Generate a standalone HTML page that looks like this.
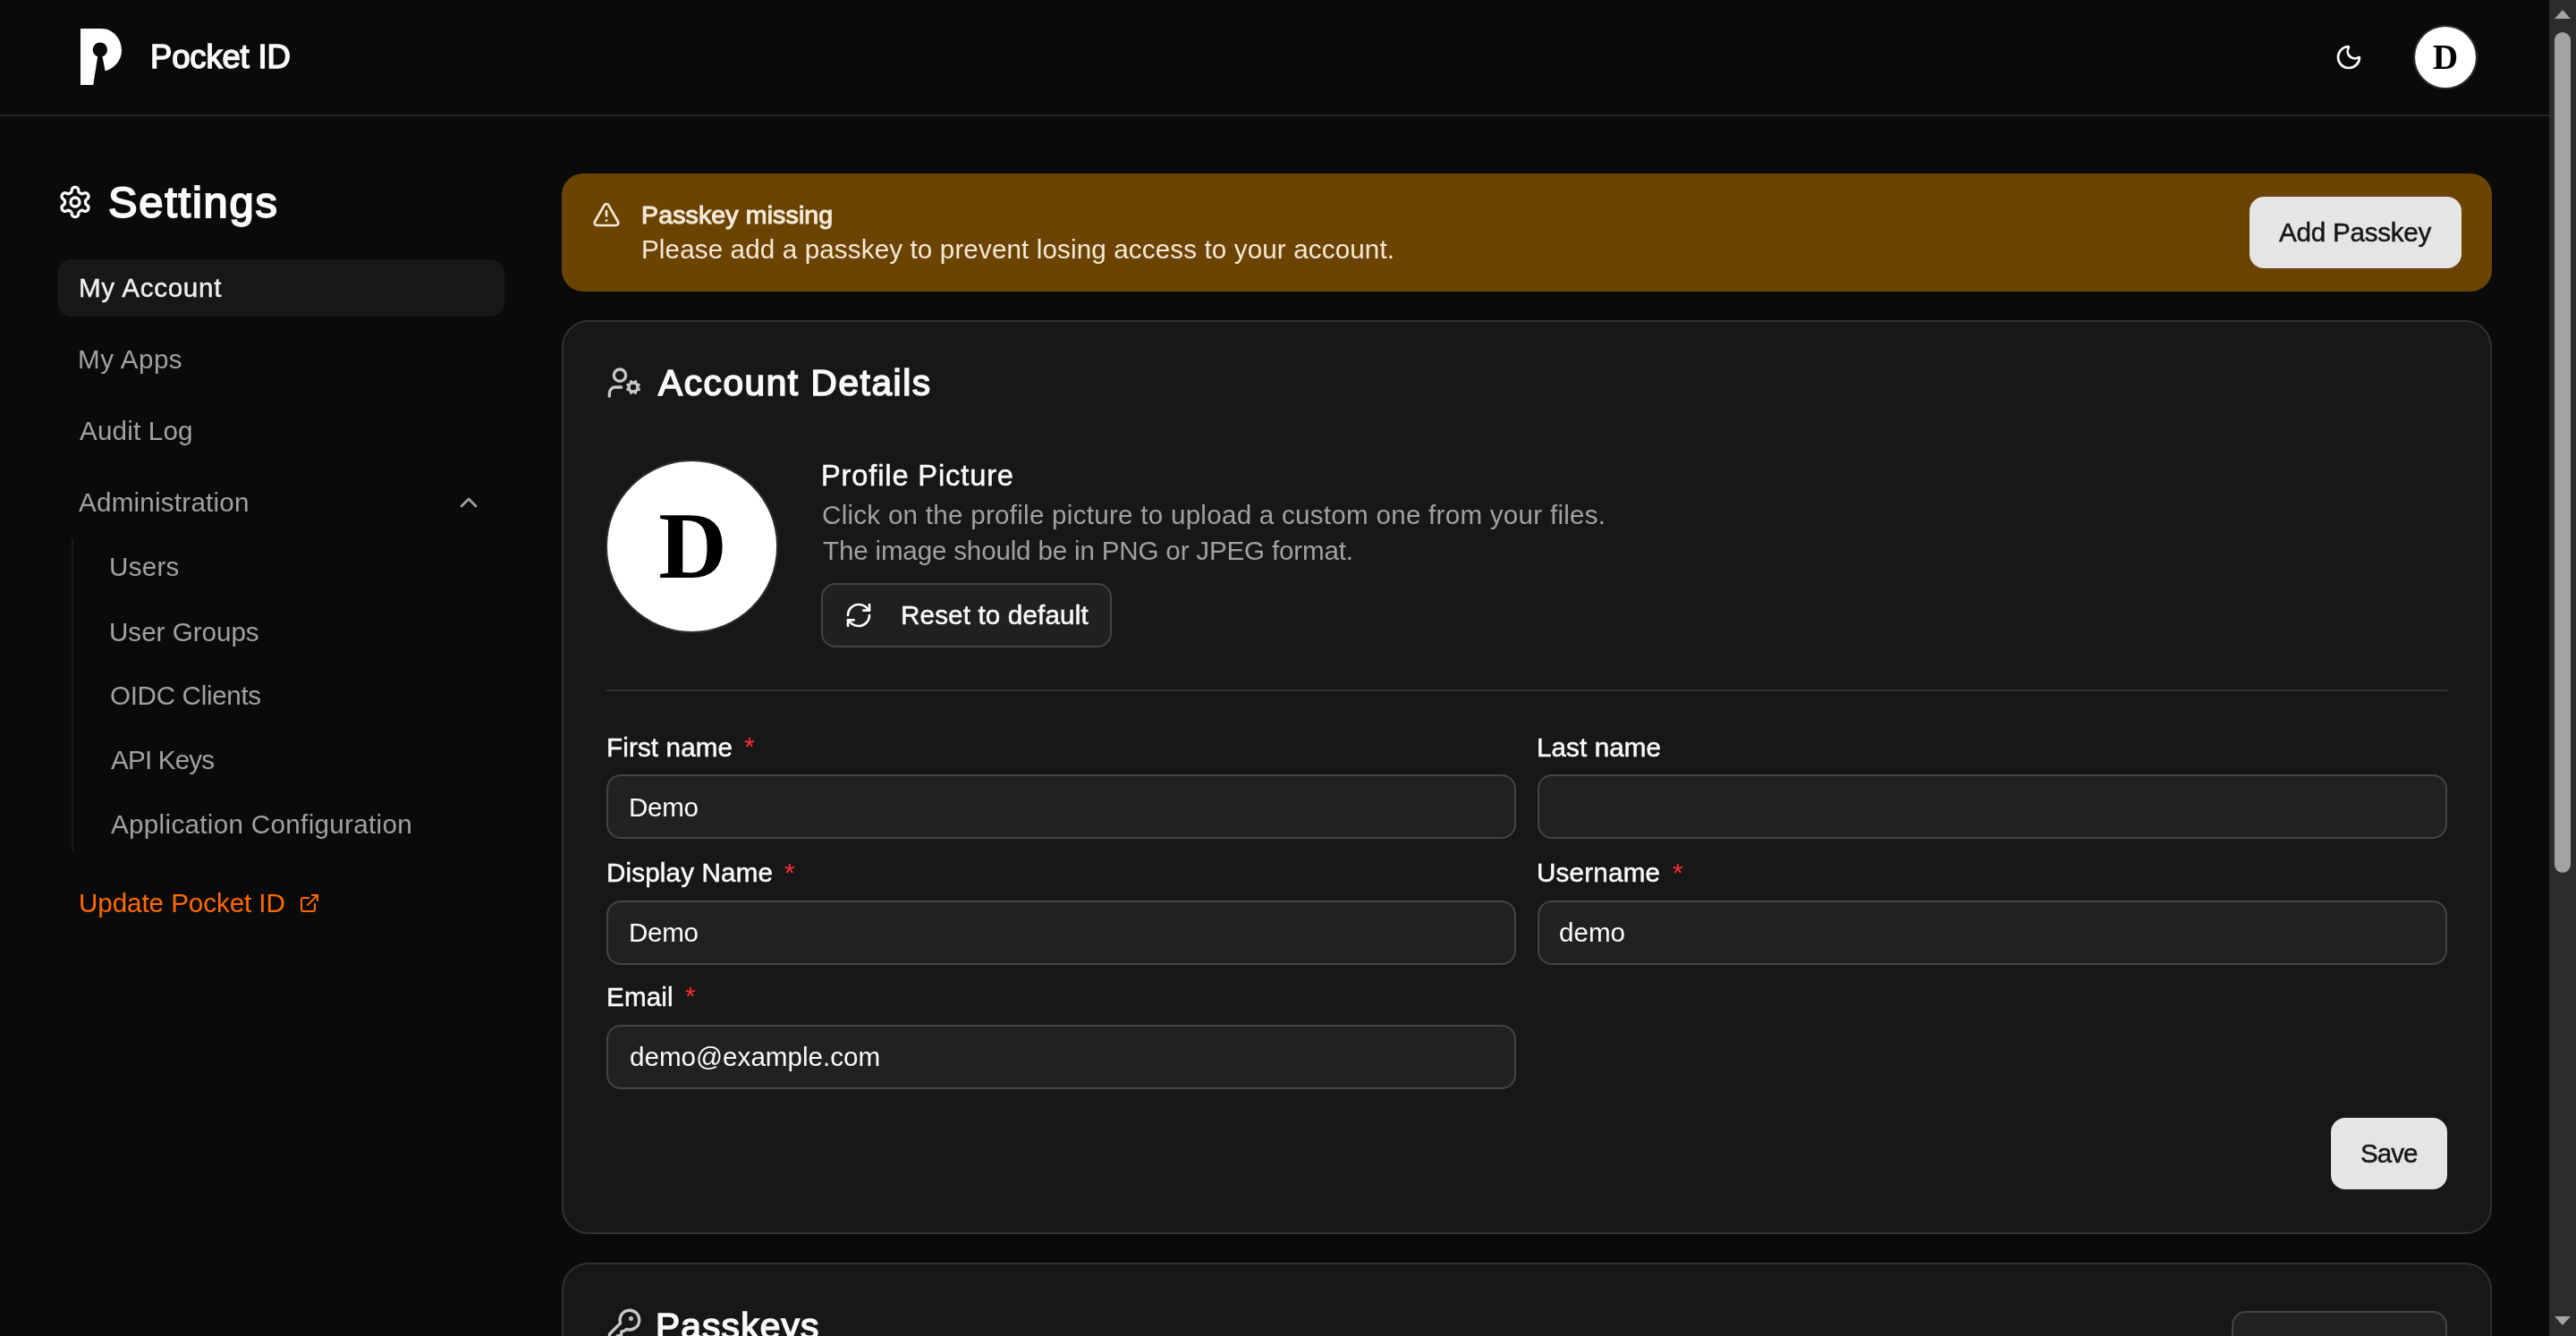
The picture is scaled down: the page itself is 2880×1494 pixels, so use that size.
<!DOCTYPE html>
<html>
<head>
<meta charset="utf-8">
<style>
@media (max-width:2000px){html{zoom:0.5}}
html,body{margin:0;padding:0;width:2880px;height:1494px;overflow:hidden;background:#0a0a0a;}
body{font-family:"Liberation Sans",sans-serif;color:#fafafa;position:relative;}
.a{position:absolute;box-sizing:border-box;}
.t{position:absolute;white-space:nowrap;line-height:1;will-change:transform;}
svg{position:absolute;overflow:visible;}
</style>
</head>
<body>
<div class="a" style="left:0;top:128px;width:2850px;height:2px;background:#232423"></div>
<svg style="left:90px;top:32px" width="46" height="63" viewBox="0 0 46 63">
<path fill="#fff" d="M0 0 H23.7 C36 0 46 11 46 24.5 C46 35 38.5 44.5 27.6 47.2 L24.5 31.2 A8.1 8.1 0 1 0 19.2 31.2 L14.2 62.9 H0 Z"/>
</svg>
<div class="t" style="left:167.8px;top:46.4px;font-size:36.5px;letter-spacing:-0.17px;color:#fafafa;-webkit-text-stroke:1.5px #fafafa;">Pocket ID</div>
<svg style="left:2610px;top:48px" width="32" height="32" viewBox="0 0 24 24" fill="none" stroke="#fafafa" stroke-width="2" stroke-linecap="round" stroke-linejoin="round"><path d="M20.985 12.486a9 9 0 1 1-9.473-9.472c.405-.022.617.46.402.803a6 6 0 0 0 8.268 8.268c.344-.215.825-.004.803.401"/></svg>
<div class="a" style="left:2700px;top:30px;width:68px;height:68px;border-radius:50%;background:#fff;box-shadow:0 0 0 2px #2f2f2f"></div>
<div class="t" style="left:2699px;top:45px;width:70px;text-align:center;font-family:'Liberation Serif',serif;font-weight:700;font-size:39.3px;color:#000">D</div>
<div class="a" style="left:2850px;top:0;width:30px;height:1494px;background:#2c2c2c"></div>
<div class="a" style="left:2856px;top:36px;width:18px;height:940px;border-radius:9px;background:#a3a3a3"></div>
<svg style="left:2856px;top:11px" width="18" height="10" viewBox="0 0 18 10"><path d="M9 0 L18 10 H0 Z" fill="#a3a3a3"/></svg>
<svg style="left:2856px;top:1472px" width="18" height="10" viewBox="0 0 18 10"><path d="M0 0 H18 L9 10 Z" fill="#a3a3a3"/></svg>
<svg style="left:64px;top:206px" width="40" height="40" viewBox="0 0 24 24" fill="none" stroke="#fafafa" stroke-width="2" stroke-linecap="round" stroke-linejoin="round"><path d="M12.22 2h-.44a2 2 0 0 0-2 2v.18a2 2 0 0 1-1 1.73l-.43.25a2 2 0 0 1-2 0l-.15-.08a2 2 0 0 0-2.73.73l-.22.38a2 2 0 0 0 .73 2.73l.15.1a2 2 0 0 1 1 1.72v.51a2 2 0 0 1-1 1.74l-.15.09a2 2 0 0 0-.73 2.730l.22.38a2 2 0 0 0 2.73.73l.15-.08a2 2 0 0 1 2 0l.43.25a2 2 0 0 1 1 1.73V20a2 2 0 0 0 2 2h.44a2 2 0 0 0 2-2v-.18a2 2 0 0 1 1-1.73l.43-.25a2 2 0 0 1 2 0l.15.08a2 2 0 0 0 2.73-.73l.22-.39a2 2 0 0 0-.73-2.73l-.15-.08a2 2 0 0 1-1-1.74v-.5a2 2 0 0 1 1-1.74l.15-.09a2 2 0 0 0 .73-2.73l-.22-.38a2 2 0 0 0-2.73-.73l-.15.08a2 2 0 0 1-2 0l-.43-.25a2 2 0 0 1-1-1.73V4a2 2 0 0 0-2-2z"/><circle cx="12" cy="12" r="3"/></svg>
<div class="t" style="left:121.0px;top:201.7px;font-size:48.8px;letter-spacing:1.78px;color:#fafafa;-webkit-text-stroke:1.9px #fafafa;">Settings</div>
<div class="a" style="left:64px;top:290px;width:500px;height:64px;border-radius:16px;background:#171717"></div>
<div class="t" style="left:88.2px;top:306.9px;font-size:29.6px;letter-spacing:0.72px;color:#f0f0f0;-webkit-text-stroke:0.4px #f0f0f0;">My Account</div>
<div class="t" style="left:87.0px;top:386.9px;font-size:29.6px;letter-spacing:0.53px;color:#a1a1a1;">My Apps</div>
<div class="t" style="left:89.0px;top:466.9px;font-size:29.6px;letter-spacing:0.18px;color:#a1a1a1;">Audit Log</div>
<div class="t" style="left:88.4px;top:547.4px;font-size:29.6px;letter-spacing:0.23px;color:#a1a1a1;">Administration</div>
<svg style="left:508px;top:546px" width="32" height="32" viewBox="0 0 24 24" fill="none" stroke="#a1a1a1" stroke-width="2" stroke-linecap="round" stroke-linejoin="round"><path d="m18 15-6-6-6 6"/></svg>
<div class="a" style="left:80px;top:602px;width:2px;height:351px;background:#1a1a1a"></div>
<div class="t" style="left:121.9px;top:619.4px;font-size:29.6px;letter-spacing:0.28px;color:#a1a1a1;">Users</div>
<div class="t" style="left:121.9px;top:691.7px;font-size:29.6px;letter-spacing:-0.01px;color:#a1a1a1;">User Groups</div>
<div class="t" style="left:122.9px;top:762.9px;font-size:29.6px;letter-spacing:-0.32px;color:#a1a1a1;">OIDC Clients</div>
<div class="t" style="left:123.9px;top:834.9px;font-size:29.6px;letter-spacing:-0.8px;color:#a1a1a1;">API Keys</div>
<div class="t" style="left:123.9px;top:907.1px;font-size:29.6px;letter-spacing:0.32px;color:#a1a1a1;">Application Configuration</div>
<div class="t" style="left:87.5px;top:994.9px;font-size:29.6px;letter-spacing:-0.07px;color:#ff6900;">Update Pocket ID</div>
<svg style="left:333.6px;top:998px" width="24" height="24" viewBox="0 0 24 24" fill="none" stroke="#ff6900" stroke-width="2" stroke-linecap="round" stroke-linejoin="round"><path d="M15 3h6v6"/><path d="M10 14 21 3"/><path d="M18 13v6a2 2 0 0 1-2 2H5a2 2 0 0 1-2-2V8a2 2 0 0 1 2-2h6"/></svg>
<div class="a" style="left:628px;top:194px;width:2158px;height:132px;border-radius:24px;background:#6b4404"></div>
<svg style="left:662px;top:224px" width="32" height="32" viewBox="0 0 24 24" fill="none" stroke="#f5e9d6" stroke-width="2" stroke-linecap="round" stroke-linejoin="round"><path d="m21.73 18-8-14a2 2 0 0 0-3.48 0l-8 14A2 2 0 0 0 4 21h16a2 2 0 0 0 1.73-3"/><path d="M12 9v4"/><path d="M12 17h.01"/></svg>
<div class="t" style="left:717.0px;top:225.5px;font-size:28.5px;letter-spacing:0.14px;color:#f5e9d6;-webkit-text-stroke:1.1px #f5e9d6;">Passkey missing</div>
<div class="t" style="left:717.0px;top:264.4px;font-size:29.6px;letter-spacing:0.13px;color:#f5e9d6;">Please add a passkey to prevent losing access to your account.</div>
<div class="a" style="left:2515px;top:220px;width:237px;height:80px;border-radius:16px;background:#e5e5e5"></div>
<div class="t" style="left:2548.2px;top:244.9px;font-size:29.6px;letter-spacing:-0.24px;color:#171717;-webkit-text-stroke:0.5px #171717;">Add Passkey</div>
<div class="a" style="left:628px;top:358px;width:2158px;height:1022px;border:2px solid #303131;border-radius:30px;background:#171717"></div>
<svg style="left:678px;top:408px" width="40" height="40" viewBox="0 0 24 24" fill="none" stroke="#c8c8c8" stroke-width="2" stroke-linecap="round" stroke-linejoin="round"><path d="M10 15H6a4 4 0 0 0-4 4v2"/><path d="m14.305 16.53.923-.382"/><path d="m15.228 13.852-.923-.383"/><path d="m16.852 12.228-.383-.923"/><path d="m16.852 17.772-.383.924"/><path d="m19.148 12.228.383-.923"/><path d="m19.53 18.696-.382-.924"/><path d="m20.772 13.852.924-.383"/><path d="m20.772 16.148.924.383"/><circle cx="18" cy="15" r="3"/><circle cx="9" cy="7" r="4"/></svg>
<div class="t" style="left:736.1px;top:408.4px;font-size:40.6px;letter-spacing:1.58px;color:#fafafa;-webkit-text-stroke:1.6px #fafafa;">Account Details</div>
<div class="a" style="left:678.8px;top:516px;width:189.5px;height:189.5px;border-radius:50%;background:#fff;box-shadow:0 0 0 2px #2f2f2f"></div>
<div class="t" style="left:678.5px;top:557.5px;width:191px;text-align:center;font-family:'Liberation Serif',serif;font-weight:700;font-size:106px;color:#000">D</div>
<div class="t" style="left:918.0px;top:515.6px;font-size:32.6px;letter-spacing:0.87px;color:#fafafa;-webkit-text-stroke:0.5px #fafafa;">Profile Picture</div>
<div class="t" style="left:918.7px;top:560.6px;font-size:29.6px;letter-spacing:0.26px;color:#a1a1a1;">Click on the profile picture to upload a custom one from your files.</div>
<div class="t" style="left:919.7px;top:600.9px;font-size:29.6px;letter-spacing:-0.18px;color:#a1a1a1;">The image should be in PNG or JPEG format.</div>
<div class="a" style="left:918px;top:652px;width:325px;height:72px;border-radius:16px;background:#202020;border:2px solid #444444"></div>
<svg style="left:944px;top:672px" width="32" height="32" viewBox="0 0 24 24" fill="none" stroke="#fafafa" stroke-width="2" stroke-linecap="round" stroke-linejoin="round"><path d="M3 12a9 9 0 0 1 9-9 9.75 9.75 0 0 1 6.74 2.74L21 8"/><path d="M21 3v5h-5"/><path d="M21 12a9 9 0 0 1-9 9 9.75 9.75 0 0 1-6.74-2.74L3 16"/><path d="M8 16H3v5"/></svg>
<div class="t" style="left:1007.2px;top:672.9px;font-size:29.6px;letter-spacing:0.16px;color:#fafafa;-webkit-text-stroke:0.5px #fafafa;">Reset to default</div>
<div class="a" style="left:678px;top:771px;width:2058px;height:2px;background:#303131"></div>
<div class="t" style="left:677.8px;top:820.7px;font-size:29.6px;letter-spacing:0.14px;color:#fafafa;-webkit-text-stroke:0.5px #fafafa;">First name</div>
<div class="t" style="left:831.5px;top:820px;font-size:30px;color:#fb2c36">*</div>
<div class="a" style="left:678px;top:866px;width:1017px;height:72px;border-radius:16px;background:#212121;border:2px solid #444444"></div>
<div class="t" style="left:703.0px;top:887.9px;font-size:29.6px;letter-spacing:-0.29px;color:#fafafa;">Demo</div>
<div class="t" style="left:1718.2px;top:820.7px;font-size:29.6px;letter-spacing:0.1px;color:#fafafa;-webkit-text-stroke:0.5px #fafafa;">Last name</div>
<div class="a" style="left:1719px;top:866px;width:1017px;height:72px;border-radius:16px;background:#212121;border:2px solid #444444"></div>
<div class="t" style="left:677.8px;top:961.2px;font-size:29.6px;letter-spacing:0.16px;color:#fafafa;-webkit-text-stroke:0.5px #fafafa;">Display Name</div>
<div class="t" style="left:876.5px;top:961px;font-size:30px;color:#fb2c36">*</div>
<div class="a" style="left:678px;top:1007px;width:1017px;height:72px;border-radius:16px;background:#212121;border:2px solid #444444"></div>
<div class="t" style="left:703.0px;top:1028.4px;font-size:29.6px;letter-spacing:-0.29px;color:#fafafa;">Demo</div>
<div class="t" style="left:1718.2px;top:961.2px;font-size:29.6px;letter-spacing:0.21px;color:#fafafa;-webkit-text-stroke:0.5px #fafafa;">Username</div>
<div class="t" style="left:1869.5px;top:961px;font-size:30px;color:#fb2c36">*</div>
<div class="a" style="left:1719px;top:1007px;width:1017px;height:72px;border-radius:16px;background:#212121;border:2px solid #444444"></div>
<div class="t" style="left:1743px;top:1028.4px;font-size:29.6px;letter-spacing:0px;color:#fafafa">demo</div>
<div class="t" style="left:677.8px;top:1099.9px;font-size:29.6px;letter-spacing:0.14px;color:#fafafa;-webkit-text-stroke:0.5px #fafafa;">Email</div>
<div class="t" style="left:765.5px;top:1099px;font-size:30px;color:#fb2c36">*</div>
<div class="a" style="left:678px;top:1146px;width:1017px;height:72px;border-radius:16px;background:#212121;border:2px solid #444444"></div>
<div class="t" style="left:703.5px;top:1166.9px;font-size:29.6px;letter-spacing:0.01px;color:#fafafa;">demo@example.com</div>
<div class="a" style="left:2606px;top:1250px;width:130px;height:80px;border-radius:16px;background:#e5e5e5"></div>
<div class="t" style="left:2638.8px;top:1274.9px;font-size:29.6px;letter-spacing:-1.03px;color:#171717;-webkit-text-stroke:0.5px #171717;">Save</div>
<div class="a" style="left:628px;top:1412px;width:2158px;height:400px;border:2px solid #303131;border-radius:30px;background:#171717"></div>
<svg style="left:678px;top:1462px" width="40" height="40" viewBox="0 0 24 24" fill="none" stroke="#c8c8c8" stroke-width="2" stroke-linecap="round" stroke-linejoin="round"><path d="M2.586 17.414A2 2 0 0 0 2 18.828V21a1 1 0 0 0 1 1h3a1 1 0 0 0 1-1v-1a1 1 0 0 1 1-1h1a1 1 0 0 0 1-1v-1a1 1 0 0 1 1-1h.172a2 2 0 0 0 1.414-.586l.814-.814a6.5 6.5 0 1 0-4-4z"/><circle cx="16.5" cy="7.5" r=".5" fill="#c8c8c8"/></svg>
<div class="t" style="left:732.8px;top:1463.1px;font-size:40.6px;letter-spacing:1.23px;color:#fafafa;-webkit-text-stroke:1.6px #fafafa;">Passkeys</div>
<div class="a" style="left:2495px;top:1466px;width:241px;height:100px;border-radius:16px;background:#212121;border:2px solid #444444"></div>
</body>
</html>
